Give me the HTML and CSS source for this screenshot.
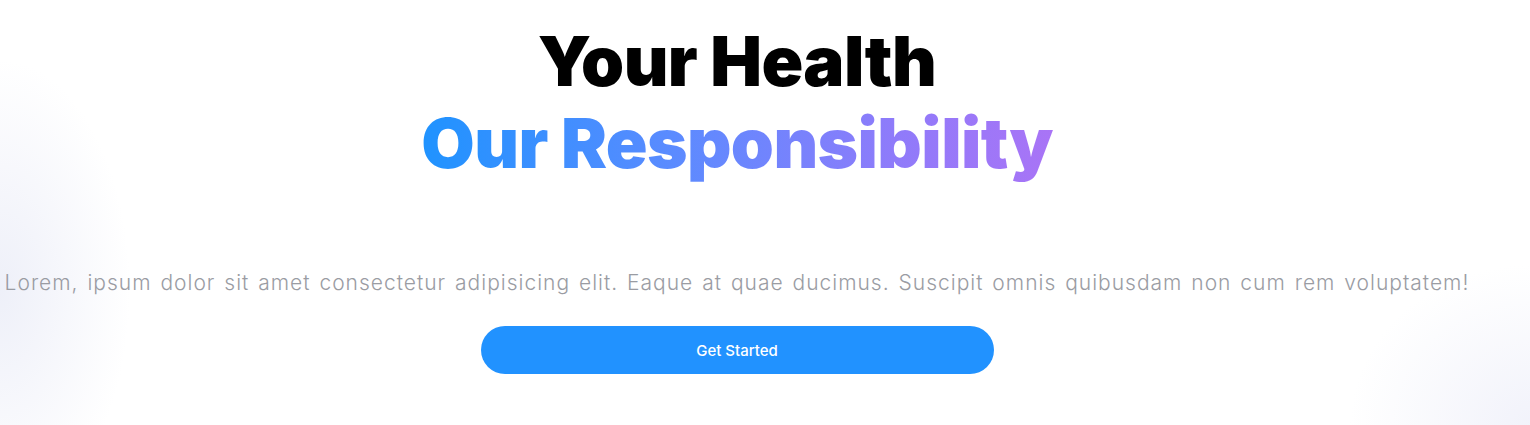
FILE: index.html
```html
<!DOCTYPE html>
<html lang="en">
<head>
<meta charset="utf-8">
<title>Your Health</title>
<link rel="stylesheet" href="styles.css">
</head>
<body>
<section class="hero">
  <h1 class="title">
    <span class="line">Your Health</span>
    <span class="line gradient">Our Responsibility</span>
  </h1>
  <p class="lead">Lorem, ipsum dolor sit amet consectetur adipisicing elit. Eaque at quae ducimus. Suscipit omnis quibusdam non cum rem voluptatem!</p>
  <a class="btn" href="#">Get Started</a>
</section>
</body>
</html>
```
FILE: styles.css
```css
html, body {
  margin: 0;
  padding: 0;
}
body {
  width: 1530px;
  height: 425px;
  overflow: hidden;
  background:
    radial-gradient(ellipse 130px 230px at 0px 290px, rgba(236,238,248,0.9), rgba(255,255,255,0) 100%),
    radial-gradient(ellipse 180px 160px at 1530px 425px, rgba(240,241,250,0.9), rgba(255,255,255,0) 100%),
    #ffffff;
  font-family: "Inter", "Open Sans", sans-serif;
}
.hero {
  width: 1474px;
  display: flex;
  flex-direction: column;
  align-items: center;
  text-align: center;
  padding-top: 20px;
}
.title {
  margin: 0;
  font-weight: 900;
  font-size: 69px;
  line-height: 82px;
  letter-spacing: -0.6px;
  color: #000;
}
.line {
  display: block;
}
.gradient {
  background: linear-gradient(90deg, #1f93ff 0%, #5b8bff 40%, #8f7bfa 75%, #a974f6 100%);
  -webkit-background-clip: text;
  background-clip: text;
  color: transparent;
  width: fit-content;
  margin: 0 auto;
}
.lead {
  margin: 84px 0 0;
  font-size: 21px;
  font-weight: 300;
  line-height: 30px;
  letter-spacing: 1px;
  word-spacing: 2px;
  color: #9a9ca3;
  white-space: nowrap;
}
.btn {
  margin-top: 28px;
  width: 513px;
  height: 48px;
  border-radius: 24px;
  background: #2192ff;
  color: #fff;
  text-decoration: none;
  font-size: 15px;
  font-weight: 500;
  display: flex;
  align-items: center;
  justify-content: center;
}
```
